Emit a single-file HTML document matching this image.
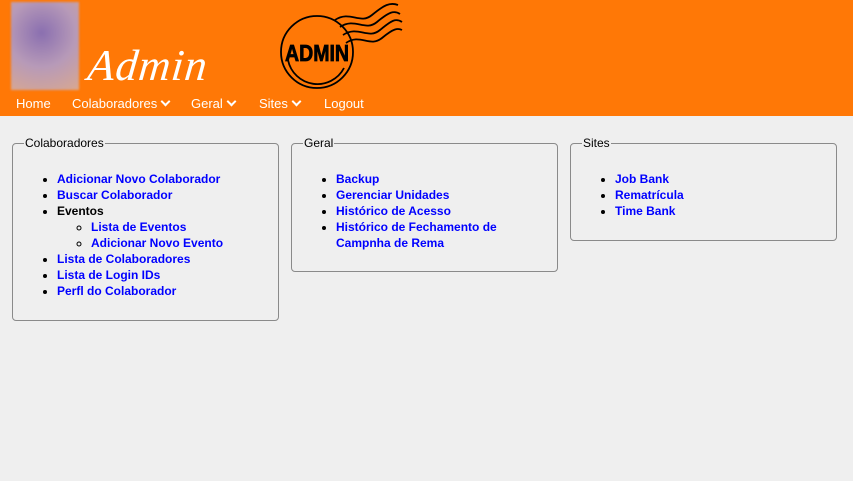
<!DOCTYPE html>
<html><head><meta charset="utf-8"><style>
*{margin:0;padding:0;box-sizing:border-box}
body{width:853px;height:481px;background:#efefef;font-family:"Liberation Sans",sans-serif;overflow:hidden;position:relative}
.hdr{position:absolute;left:0;top:0;width:853px;height:116px;background:#ff7806}
.photo{position:absolute;left:11px;top:2px;width:68px;height:88px;background:radial-gradient(circle at 45% 35%,#8a6fb0,#b79ab8 50%,#d9a890 100%);filter:blur(1px)}
.title{position:absolute;left:88px;top:40px;font-family:"Liberation Serif",serif;font-style:italic;font-size:44px;color:#fff;letter-spacing:1px;transform:skewX(-6deg)}
.nav{position:absolute;top:96px;left:16px;color:#fff;font-size:13px}
.nav span{position:absolute;white-space:nowrap}
.chev{display:inline-block;width:7px;height:7px;border-right:2.5px solid #fff;border-bottom:2.5px solid #fff;transform:rotate(45deg);margin-left:5px;position:relative;top:-3px}
fieldset{position:absolute;border:1px solid #8a8a8a;border-radius:4px;padding:0}
legend{font-size:12px;color:#000;margin-left:11px;padding:0 1px;line-height:14px}
ul{list-style:disc;margin:0;padding-left:44px;font-size:12px;font-weight:bold;line-height:16px;color:#00f;margin-top:21px;white-space:nowrap}
ul.w{white-space:normal;padding-right:30px}
ul ul{list-style:circle;margin-top:0;padding-left:34px}
li::marker{color:#000}
li.k{color:#000}
</style></head><body>
<div class="hdr">
<div class="photo"></div>
<div class="title">Admin</div>
<svg style="position:absolute;left:280px;top:0" width="130" height="95" viewBox="0 0 130 95">
<g fill="none" stroke="#000" stroke-width="1.8">
<circle cx="37" cy="52" r="36"/>
<path d="M8 60 A30 30 0 0 0 64 68"/>
<path d="M55 20 C70 10 80 25 92 15 S110 2 118 5"/>
<path d="M60 27 C75 17 85 32 97 22 S114 10 120 14"/>
<path d="M63 35 C78 25 88 40 100 30 S116 18 122 22"/>
<path d="M66 43 C80 33 90 48 102 38 S118 28 122 30"/>
</g>
<text x="5" y="61" font-family="Liberation Sans,sans-serif" font-weight="bold" font-size="23" fill="#000" stroke="#000" stroke-width="0.8" textLength="64" lengthAdjust="spacingAndGlyphs">ADMIN</text>
</svg>
<div class="nav">
<span style="left:0">Home</span>
<span style="left:56px">Colaboradores<i class="chev"></i></span>
<span style="left:175px">Geral<i class="chev"></i></span>
<span style="left:243px">Sites<i class="chev"></i></span>
<span style="left:308px">Logout</span>
</div>
</div>
<fieldset style="left:12px;top:136px;width:267px;height:185px"><legend>Colaboradores</legend>
<ul><li>Adicionar Novo Colaborador</li><li>Buscar Colaborador</li><li class="k">Eventos<ul><li>Lista de Eventos</li><li>Adicionar Novo Evento</li></ul></li><li>Lista de Colaboradores</li><li>Lista de Login IDs</li><li>Perfl do Colaborador</li></ul>
</fieldset>
<fieldset style="left:291px;top:136px;width:267px;height:136px"><legend>Geral</legend>
<ul class="w"><li>Backup</li><li>Gerenciar Unidades</li><li>Histórico de Acesso</li><li>Histórico de Fechamento de Campnha de Rema</li></ul>
</fieldset>
<fieldset style="left:570px;top:136px;width:267px;height:105px"><legend>Sites</legend>
<ul><li>Job Bank</li><li>Rematrícula</li><li>Time Bank</li></ul>
</fieldset>
</body></html>
